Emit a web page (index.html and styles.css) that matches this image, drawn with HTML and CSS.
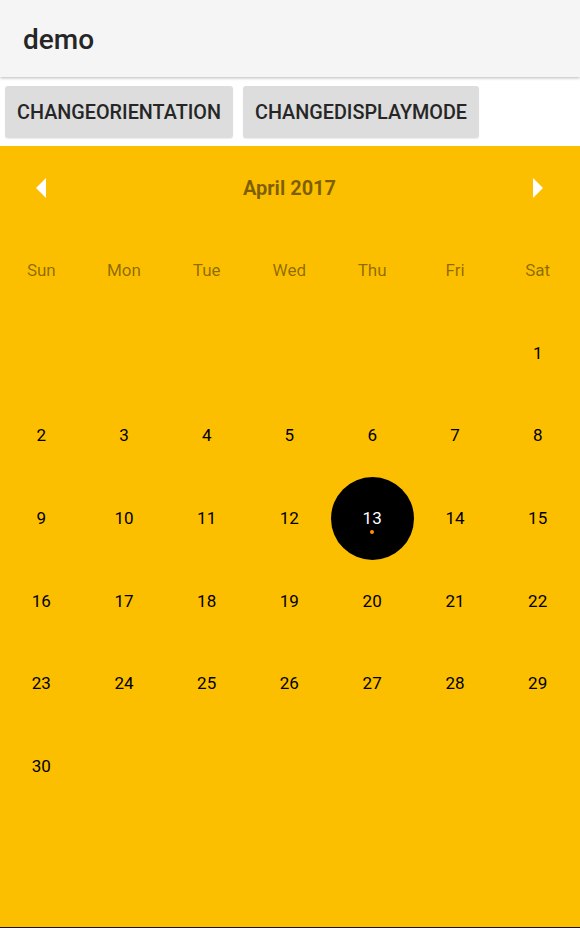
FILE: index.html
```html
<!DOCTYPE html>
<html>
<head>
<meta charset="utf-8">
<link rel="stylesheet" href="styles.css">
</head>
<body>
<header class="appbar"><span class="title">demo</span></header>
<div class="actions">
  <button class="btn">CHANGEORIENTATION</button>
  <button class="btn">CHANGEDISPLAYMODE</button>
</div>
<section class="calendar">
  <div class="month-row">
    <span class="nav"><svg width="10" height="20" viewBox="0 0 10 20"><polygon points="10,0 0,10 10,20" fill="#fff"/></svg></span>
    <span class="month">April 2017</span>
    <span class="nav"><svg width="10" height="20" viewBox="0 0 10 20"><polygon points="0,0 10,10 0,20" fill="#fff"/></svg></span>
  </div>
  <div class="grid">
    <div class="wd">Sun</div><div class="wd">Mon</div><div class="wd">Tue</div><div class="wd">Wed</div><div class="wd">Thu</div><div class="wd">Fri</div><div class="wd">Sat</div>
    <div class="day"></div><div class="day"></div><div class="day"></div><div class="day"></div><div class="day"></div><div class="day"></div><div class="day">1</div>
    <div class="day">2</div><div class="day">3</div><div class="day">4</div><div class="day">5</div><div class="day">6</div><div class="day">7</div><div class="day">8</div>
    <div class="day">9</div><div class="day">10</div><div class="day">11</div><div class="day">12</div><div class="day"><span class="sel">13<i class="dot"></i></span></div><div class="day">14</div><div class="day">15</div>
    <div class="day">16</div><div class="day">17</div><div class="day">18</div><div class="day">19</div><div class="day">20</div><div class="day">21</div><div class="day">22</div>
    <div class="day">23</div><div class="day">24</div><div class="day">25</div><div class="day">26</div><div class="day">27</div><div class="day">28</div><div class="day">29</div>
    <div class="day">30</div><div class="day"></div><div class="day"></div><div class="day"></div><div class="day"></div><div class="day"></div><div class="day"></div>
  </div>
</section>
</body>
</html>
```
FILE: styles.css
```css
html, body {
  margin: 0;
  padding: 0;
  background: #fff;
  font-family: Roboto, "Noto Sans", sans-serif;
}
body {
  width: 580px;
  height: 928px;
  overflow: hidden;
  display: flex;
  flex-direction: column;
  border-bottom: 1px solid #1a1200;
  box-sizing: border-box;
}
.appbar {
  height: 77px;
  flex: none;
  background: #f5f5f5;
  box-shadow: 0 1px 3px rgba(0,0,0,0.28);
  display: flex;
  align-items: center;
  padding-left: 23px;
  position: relative;
  z-index: 1;
}
.title {
  font-size: 28px;
  font-weight: 500;
  color: #262626;
  margin-top: 2px;
}
.actions {
  flex: none;
  display: flex;
  gap: 10px;
  padding: 9px 5px 8px;
}
.btn {
  height: 52px;
  border: none;
  border-radius: 3px;
  background: #dcdddc;
  font-family: Roboto, sans-serif;
  font-weight: 500;
  font-size: 19.8px;
  color: #262626;
  padding: 0;
  box-shadow: 0 1px 1px rgba(0,0,0,0.08);
}
.btn:first-child { width: 228px; }
.btn:last-child { width: 236px; }
.calendar {
  flex: 1;
  background: #fbbf00;
  padding-top: 1px;
}
.month-row {
  height: 82px;
  display: flex;
  align-items: center;
  justify-content: space-between;
  padding: 0 37px 0 36px;
}
.nav { display: flex; }
.month {
  font-size: 20px;
  font-weight: 700;
  color: rgba(0,0,0,0.5);
}
.grid {
  display: grid;
  grid-template-columns: repeat(7, 1fr);
  grid-auto-rows: 82.6px;
  padding-right: 1px;
}
.wd, .day {
  display: flex;
  align-items: center;
  justify-content: center;
  font-size: 17px;
}
.wd { color: rgba(0,0,0,0.45); }
.day { color: #000; }
.sel {
  width: 83px;
  height: 83px;
  border-radius: 50%;
  background: #000;
  color: #fff;
  display: flex;
  align-items: center;
  justify-content: center;
  position: relative;
}
.dot {
  position: absolute;
  width: 4px;
  height: 4px;
  border-radius: 50%;
  background: #ff8f00;
  left: 39.5px;
  top: 53px;
}
```
